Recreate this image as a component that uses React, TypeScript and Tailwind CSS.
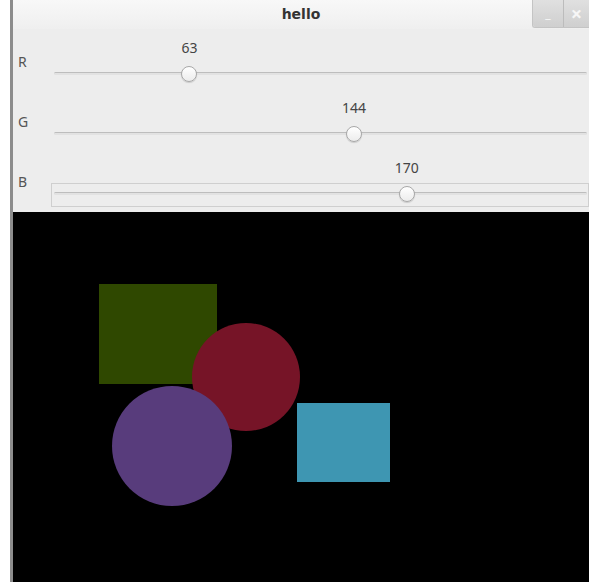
import React from "react";

const channels = [
  { label: "R", value: 63 },
  { label: "G", value: 144 },
  { label: "B", value: 170, focused: true },
];

const Slider: React.FC<{ label: string; value: number; focused?: boolean }> = ({
  label,
  value,
  focused,
}) => {
  // thumb centre, from the left edge of the track box
  const pos = 7.5 + (value / 255) * (533 - 15);
  return (
    <div className="flex h-[60px]">
      <div className="w-[41px] pl-[5px] pt-[22px] text-[14px] text-[#555]">{label}</div>
      <div className="relative flex-1">
        <div
          className="absolute top-[8px] -translate-x-1/2 text-[14px] text-[#444]"
          style={{ left: pos }}
        >
          {value}
        </div>
        {focused && (
          <div className="absolute left-[-3px] right-0 top-[34px] h-[24px] border border-[#cfcfcf]" />
        )}
        <div className="absolute left-0 right-[2px] top-[43px] h-[3px] rounded-full border-t border-[#bdbdbd] bg-[#e2e2e2]" />
        <div
          className="absolute top-[37px] h-[16px] w-[16px] -translate-x-1/2 rounded-full border border-[#a8a8a8] bg-gradient-to-b from-white to-[#ececec] shadow-[0_1px_1px_rgba(0,0,0,0.15)]"
          style={{ left: pos }}
        />
      </div>
    </div>
  );
};

const App: React.FC = () => {
  return (
    <div className="flex h-[582px] w-[589px] bg-white font-['Noto_Sans',sans-serif]">
      <div className="w-[10px] bg-white" />
      <div className="w-[3px] bg-[#8c8c8c]" />
      <div className="flex flex-1 flex-col bg-[#ededed]">
        <div className="relative flex h-[29px] items-center justify-center bg-gradient-to-b from-[#f8f8f8] to-[#efefef]">
          <span className="font-['DejaVu_Sans',sans-serif] text-[14px] font-bold text-[#333]">hello</span>
          <div className="absolute right-0 top-0 flex h-[28px] overflow-hidden rounded-bl-[3px] border-b border-l border-[#c4c4c4]">
            <div className="flex w-[30px] items-end justify-center bg-gradient-to-b from-[#e0e0e0] to-[#cfcfcf] pb-[7px] text-[13px] font-bold leading-none text-[#f6f6f6]">
              _
            </div>
            <div className="w-px bg-[#bcbcbc]" />
            <div className="flex w-[25px] items-center justify-center bg-gradient-to-b from-[#e0e0e0] to-[#cfcfcf] text-[20px] font-bold leading-none text-[#f6f6f6]">
              ×
            </div>
          </div>
        </div>
        <div className="h-[183px]">
          {channels.map((c) => (
            <Slider key={c.label} {...c} />
          ))}
        </div>
        <div className="flex-1 bg-black">
          <svg width="576" height="370" viewBox="0 0 576 370">
            <rect x="86" y="72" width="118" height="100" fill="#2f4800" />
            <circle cx="233" cy="165" r="54" fill="#761427" />
            <circle cx="159" cy="234" r="60" fill="#583c7c" />
            <rect x="284" y="191" width="93" height="79" fill="#3e96b2" />
          </svg>
        </div>
      </div>
    </div>
  );
};

export default App;
